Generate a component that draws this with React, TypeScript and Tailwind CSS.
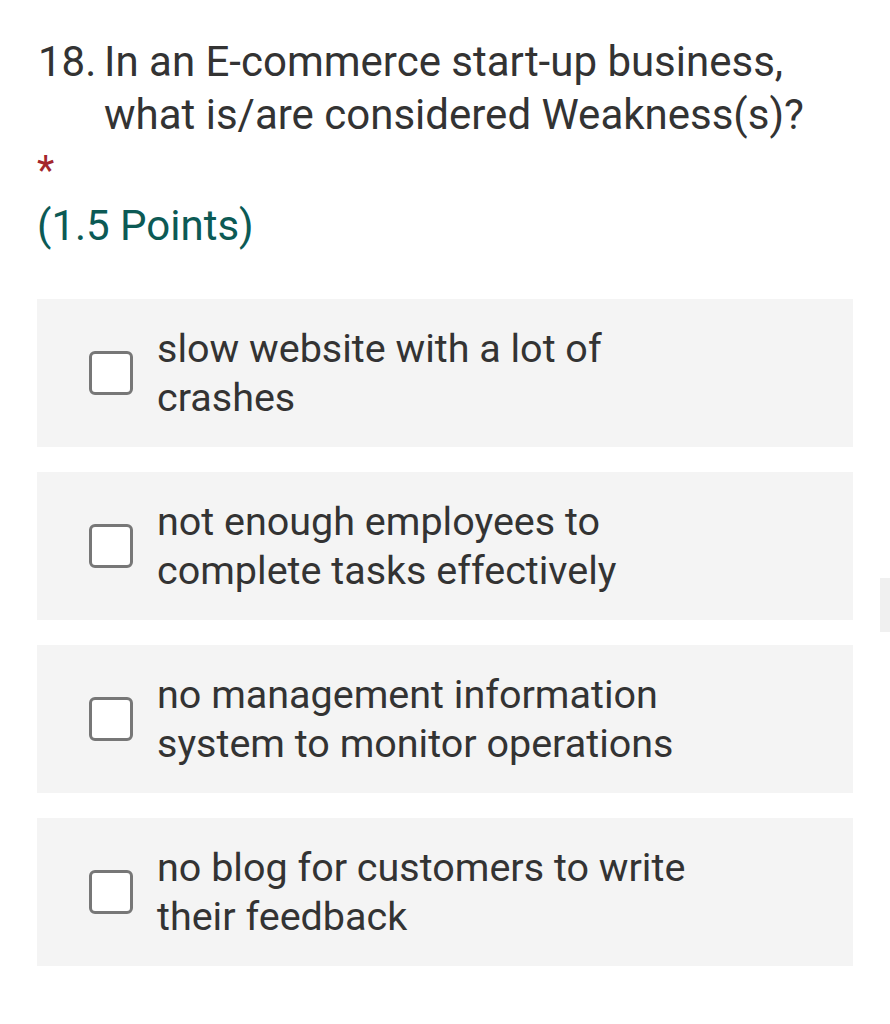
import React from "react";

const options = [
  ["slow website with a lot of", "crashes"],
  ["not enough employees to", "complete tasks effectively"],
  ["no management information", "system to monitor operations"],
  ["no blog for customers to write", "their feedback"],
];

export default function App() {
  return (
    <div
      className="relative min-h-[1024px] w-[890px] bg-white"
      style={{ fontFamily: "Roboto, 'Noto Sans', sans-serif" }}
    >
      <div className="px-[37px] pt-[35px]">
        <div className="flex text-[42px] leading-[53px] text-[#333333]">
          <span className="w-[67px] shrink-0 pl-[1px]">18.</span>
          <span>
            In an E-commerce start-up business,
            <br />
            what is/are considered Weakness(s)?
          </span>
        </div>
        <div className="mt-[10px] h-[40px] text-[40px] leading-[40px] text-[#a4262c]">*</div>
        <div className="mt-[10px] text-[42px] leading-[50px] text-[#0c5a55]">(1.5 Points)</div>
        <div className="mt-[48px] flex flex-col gap-[25px]">
          {options.map((o, i) => (
            <div
              key={i}
              className="flex h-[148px] items-center bg-[#f4f4f4] pl-[52px]"
            >
              <div className="h-[44px] w-[44px] shrink-0 rounded-[6px] border-[3px] border-[#777777] bg-white" />
              <div className="ml-[24px] text-[39.5px] leading-[49px] text-[#333333]">
                {o[0]}
                <br />
                {o[1]}
              </div>
            </div>
          ))}
        </div>
      </div>
      <div className="absolute left-[880px] top-[578px] h-[54px] w-[10px] bg-[#f0f0f0]" />
    </div>
  );
}
